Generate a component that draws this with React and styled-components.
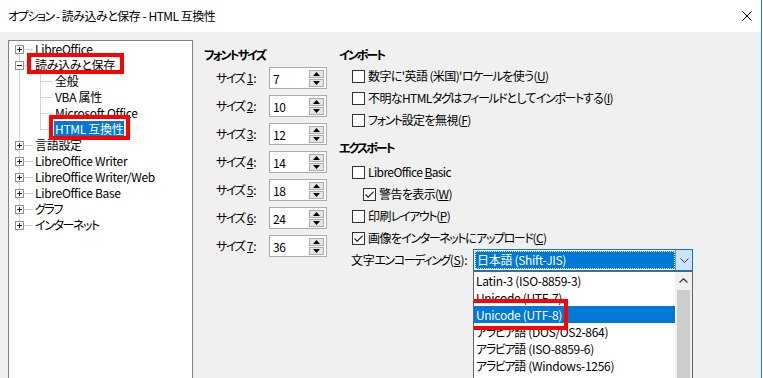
import React from 'react'
import styled, { createGlobalStyle } from 'styled-components'

const GlobalStyle = createGlobalStyle`
  html, body { margin: 0; padding: 0; background: #fff; }
  body {
    font-family: "Noto Sans CJK JP", "Noto Sans", sans-serif;
    font-size: 12px;
    color: #000;
    letter-spacing: -0.3px;
    font-feature-settings: "palt";
  }
  u { text-underline-offset: 1px; }
`

// Yu Gothic UI katakana are much narrower than Noto's, so tighten katakana runs
const Kana = styled.span`
  letter-spacing: ${(p) => (p.$bold ? -2 : -1.4)}px;
`

const KANA = /([\u30A0-\u30FF]+)/

const Jp = ({ children, bold }) => (
  <>
    {React.Children.map(children, (node) =>
      typeof node === 'string'
        ? node.split(KANA).map((part, i) =>
            i % 2 ? (
              <Kana key={i} $bold={bold}>
                {part}
              </Kana>
            ) : (
              part
            )
          )
        : node
    )}
  </>
)

const Window = styled.div`
  width: 762px;
  height: 378px;
  box-sizing: border-box;
  overflow: hidden;
  border-right: 1px solid #1883d7;
  display: flex;
  flex-direction: column;
`

const TitleBar = styled.div`
  height: 32px;
  flex: none;
  display: flex;
  align-items: center;
  justify-content: space-between;
  padding: 0 9px 0 8px;
  background: #fff;
  line-height: 16px;
  letter-spacing: -0.5px;
`

const Body = styled.div`
  flex: 1;
  display: flex;
  background: #f0f0f0;
  padding: 8px 0 0 8px;
  min-height: 0;
`

/* ---------- tree ---------- */

const Tree = styled.div`
  width: 185px;
  height: 360px;
  flex: none;
  box-sizing: border-box;
  border: 1px solid #828282;
  background: #fff;
`

const TreeRow = styled.div`
  position: relative;
  height: 16px;
  display: flex;
  align-items: center;
  padding-left: ${(p) => (p.$level ? 46 : 26)}px;
  line-height: 16px;
  white-space: nowrap;
`

const Guide = styled.span`
  position: absolute;
  background: #d4d4d4;
  left: ${(p) => p.$x}px;
  ${(p) =>
    p.$w
      ? `top: 8px; height: 1px; width: ${p.$w}px;`
      : `width: 1px; top: ${p.$top || 0}px; bottom: ${p.$bottom || 0}px;`}
`

const Expander = styled.span`
  position: absolute;
  left: 6px;
  top: 4px;
  width: 9px;
  height: 9px;
  box-sizing: border-box;
  border: 1px solid #919191;
  background: #fff;
  z-index: 1;
  &::before {
    content: '';
    position: absolute;
    left: 1px;
    top: 3px;
    width: 5px;
    height: 1px;
    background: #1f1f3f;
  }
  &::after {
    content: '';
    display: ${(p) => (p.$open ? 'none' : 'block')};
    position: absolute;
    left: 3px;
    top: 1px;
    width: 1px;
    height: 5px;
    background: #1f1f3f;
  }
`

const TreeLabel = styled.span`
  position: relative;
  padding: 0 1px;
  margin-left: -1px;
  background: ${(p) => (p.$selected ? '#0078d7' : 'transparent')};
  color: ${(p) => (p.$selected ? '#fff' : '#000')};
`

const Mark = styled.span`
  position: absolute;
  left: ${(p) => p.$l}px;
  top: ${(p) => p.$t}px;
  width: ${(p) => p.$w}px;
  height: ${(p) => p.$h}px;
  box-sizing: border-box;
  border: 4px solid #f00;
  z-index: 5;
  pointer-events: none;
`

/* ---------- pane ---------- */

const Pane = styled.div`
  display: flex;
  margin-left: 11px;
  padding-top: 7px;
`

const Group = styled.div`
  width: ${(p) => p.$w}px;
  flex: none;
  display: flex;
  flex-direction: column;
`

const Heading = styled.div`
  font-weight: bold;
  line-height: 16px;
  height: 16px;
  margin-top: ${(p) => p.$mt || 0}px;
`

const SizeList = styled.div`
  display: flex;
  flex-direction: column;
  gap: 6px;
  margin-top: 4px;
`

const SizeRow = styled.div`
  display: flex;
  align-items: center;
  height: 22px;
  padding-left: 12px;
`

const SizeLabel = styled.span`
  width: 53px;
  line-height: 16px;
`

const Spin = styled.div`
  width: 58px;
  height: 22px;
  box-sizing: border-box;
  border: 1px solid #acacac;
  background: #fff;
  display: flex;
  align-items: center;
  justify-content: space-between;
  padding: 0 2px 0 3px;
`

const SpinButtons = styled.div`
  display: flex;
  flex-direction: column;
  gap: 1px;
`

const SpinBtn = styled.span`
  width: 15px;
  height: 8px;
  box-sizing: border-box;
  border: 1px solid #adadad;
  background: #e5e5e5;
  display: flex;
  align-items: center;
  justify-content: center;
`

const CheckList = styled.div`
  display: flex;
  flex-direction: column;
  margin-top: ${(p) => p.$mt || 0}px;
`

const CheckRow = styled.div`
  display: flex;
  align-items: center;
  height: 22px;
  padding-left: ${(p) => (p.$indent ? 24 : 13)}px;
  white-space: nowrap;
  line-height: 16px;
  letter-spacing: -0.6px;
`

const Box = styled.span`
  width: 13px;
  height: 13px;
  flex: none;
  box-sizing: border-box;
  border: 1px solid #333;
  background: #fff;
  margin-right: 3px;
  display: flex;
  align-items: center;
  justify-content: center;
`

const EncodingRow = styled.div`
  display: flex;
  align-items: center;
  height: 22px;
  padding-left: 12px;
  white-space: nowrap;
`

const EncodingLabel = styled.span`
  width: 122px;
  flex: none;
  line-height: 16px;
`

const Combo = styled.div`
  position: relative;
  width: 220px;
  height: 22px;
  flex: none;
  box-sizing: border-box;
  border: 1px solid #0078d7;
  background: #fff;
  display: flex;
  padding: 1px 0 1px 1px;
`

const ComboValue = styled.div`
  flex: 1;
  background: #0078d7;
  color: #fff;
  outline: 1px dotted #f3e9a6;
  outline-offset: -1px;
  padding-left: 2px;
  line-height: 18px;
`

const ComboArrow = styled.div`
  width: 16px;
  margin: -1px 0;
  background: #cce4f7;
  border-left: 1px solid #569de5;
  display: flex;
  align-items: center;
  justify-content: center;
`

const DropList = styled.div`
  position: absolute;
  left: -1px;
  top: 21px;
  width: 220px;
  height: 120px;
  box-sizing: border-box;
  border: 1px solid #646464;
  background: #fff;
  display: flex;
  z-index: 3;
`

const Items = styled.div`
  flex: 1;
  display: flex;
  flex-direction: column;
  overflow: hidden;
`

const Item = styled.div`
  position: relative;
  height: 17px;
  flex: none;
  line-height: 17px;
  padding-left: 2px;
  white-space: nowrap;
  background: ${(p) => (p.$selected ? '#0078d7' : 'transparent')};
  color: ${(p) => (p.$selected ? '#fff' : '#000')};
`

const ScrollBar = styled.div`
  width: 17px;
  flex: none;
  background: #f0f0f0;
  display: flex;
  flex-direction: column;
  align-items: center;
`

const ScrollArrow = styled.div`
  height: 17px;
  display: flex;
  align-items: center;
  justify-content: center;
`

const Thumb = styled.div`
  width: 13px;
  flex: 1;
  margin-top: 1px;
  background: #cdcdcd;
`

const Up = () => (
  <svg width="7" height="4" viewBox="0 0 7 4">
    <path d="M0 4 L3.5 0 L7 4 Z" fill="#000" />
  </svg>
)
const Down = () => (
  <svg width="7" height="4" viewBox="0 0 7 4">
    <path d="M0 0 L3.5 4 L7 0 Z" fill="#000" />
  </svg>
)

const Check = () => (
  <svg width="11" height="11" viewBox="0 0 11 11">
    <path d="M1.5 5.5 L4.2 8.2 L9.6 2.6" fill="none" stroke="#1a1a1a" strokeWidth="1.1" />
  </svg>
)

const tree = [
  { label: 'LibreOffice', level: 0, exp: 'plus', first: true },
  { label: '読み込みと保存', level: 0, exp: 'minus', mark: { l: 18, t: -4, w: 97, h: 21 } },
  { label: '全般', level: 1 },
  { label: 'VBA 属性', level: 1 },
  { label: 'Microsoft Office', level: 1 },
  { label: 'HTML 互換性', level: 1, lastChild: true, selected: true, mark: { l: 40, t: -6, w: 81, h: 25 } },
  { label: '言語設定', level: 0, exp: 'plus' },
  { label: 'LibreOffice Writer', level: 0, exp: 'plus' },
  { label: 'LibreOffice Writer/Web', level: 0, exp: 'plus' },
  { label: 'LibreOffice Base', level: 0, exp: 'plus' },
  { label: 'グラフ', level: 0, exp: 'plus' },
  { label: 'インターネット', level: 0, exp: 'plus', last: true },
]

const sizes = ['7', '10', '12', '14', '18', '24', '36']

const encodings = [
  'Latin-3 (ISO-8859-3)',
  'Unicode (UTF-7)',
  'Unicode (UTF-8)',
  'アラビア語 (DOS/OS2-864)',
  'アラビア語 (ISO-8859-6)',
  'アラビア語 (Windows-1256)',
]

const CheckItem = ({ checked, indent, children }) => (
  <CheckRow $indent={indent}>
    <Box>{checked && <Check />}</Box>
    <span>
      <Jp>{children}</Jp>
    </span>
  </CheckRow>
)

const App = () => {
  return (
    <>
      <GlobalStyle />
      <Window>
        <TitleBar>
          <span>
            <Jp>オプション - 読み込みと保存 - HTML 互換性</Jp>
          </span>
          <svg width="10" height="10" viewBox="0 0 10 10">
            <path d="M0.5 0.5 L9.5 9.5 M9.5 0.5 L0.5 9.5" stroke="#000" strokeWidth="1" />
          </svg>
        </TitleBar>

        <Body>
          <Tree>
            {tree.map((row) => (
              <TreeRow key={row.label} $level={row.level}>
                <Guide $x={10} $top={row.first ? 8 : 0} $bottom={row.last ? 8 : 0} />
                {row.level === 1 && <Guide $x={31} $bottom={row.lastChild ? 8 : 0} />}
                {row.level === 0 ? <Guide $x={15} $w={9} /> : <Guide $x={31} $w={12} />}
                {row.exp && <Expander $open={row.exp === 'minus'} />}
                <TreeLabel $selected={row.selected}>
                  <Jp>{row.label}</Jp>
                </TreeLabel>
                {row.mark && <Mark $l={row.mark.l} $t={row.mark.t} $w={row.mark.w} $h={row.mark.h} />}
              </TreeRow>
            ))}
          </Tree>

          <Pane>
            <Group $w={135}>
              <Heading>
                <Jp bold>フォントサイズ</Jp>
              </Heading>
              <SizeList>
                {sizes.map((v, i) => (
                  <SizeRow key={i}>
                    <SizeLabel>
                      <Jp>サイズ </Jp>
                      <u>{i + 1}</u>:
                    </SizeLabel>
                    <Spin>
                      <span>{v}</span>
                      <SpinButtons>
                        <SpinBtn><Up /></SpinBtn>
                        <SpinBtn><Down /></SpinBtn>
                      </SpinButtons>
                    </Spin>
                  </SizeRow>
                ))}
              </SizeList>
            </Group>

            <Group $w={400}>
              <Heading>
                <Jp bold>インポート</Jp>
              </Heading>
              <CheckList $mt={2}>
                <CheckItem>数字に'英語 (米国)'ロケールを使う(<u>U</u>)</CheckItem>
                <CheckItem>不明なHTMLタグはフィールドとしてインポートする(<u>I</u>)</CheckItem>
                <CheckItem>フォント設定を無視(<u>F</u>)</CheckItem>
              </CheckList>

              <Heading $mt={9}>
                <Jp bold>エクスポート</Jp>
              </Heading>
              <CheckList $mt={5}>
                <CheckItem>LibreOffice <u>B</u>asic</CheckItem>
                <CheckItem checked indent>警告を表示(<u>W</u>)</CheckItem>
                <CheckItem>印刷レイアウト(<u>P</u>)</CheckItem>
                <CheckItem checked>画像をインターネットにアップロード(<u>C</u>)</CheckItem>
                <EncodingRow>
                  <EncodingLabel>
                    <Jp>文字エンコーディング(</Jp>
                    <u>S</u>):
                  </EncodingLabel>
                  <Combo>
                    <ComboValue>日本語 (Shift-JIS)</ComboValue>
                    <ComboArrow>
                      <svg width="9" height="5" viewBox="0 0 9 5">
                        <path d="M0.5 0.5 L4.5 4.5 L8.5 0.5" fill="none" stroke="#333" strokeWidth="1" />
                      </svg>
                    </ComboArrow>
                    <DropList>
                      <Items>
                        {encodings.map((e) => (
                          <Item key={e} $selected={e === 'Unicode (UTF-8)'}>
                            <Jp>{e}</Jp>
                            {e === 'Unicode (UTF-8)' && <Mark $l={-7} $t={-7} $w={101} $h={31} />}
                          </Item>
                        ))}
                      </Items>
                      <ScrollBar>
                        <ScrollArrow>
                          <svg width="9" height="5" viewBox="0 0 9 5">
                            <path d="M0.5 4.5 L4.5 0.8 L8.5 4.5" fill="none" stroke="#444" strokeWidth="1.4" />
                          </svg>
                        </ScrollArrow>
                        <Thumb />
                      </ScrollBar>
                    </DropList>
                  </Combo>
                </EncodingRow>
              </CheckList>
            </Group>
          </Pane>
        </Body>
      </Window>
    </>
  )
}

export default App
